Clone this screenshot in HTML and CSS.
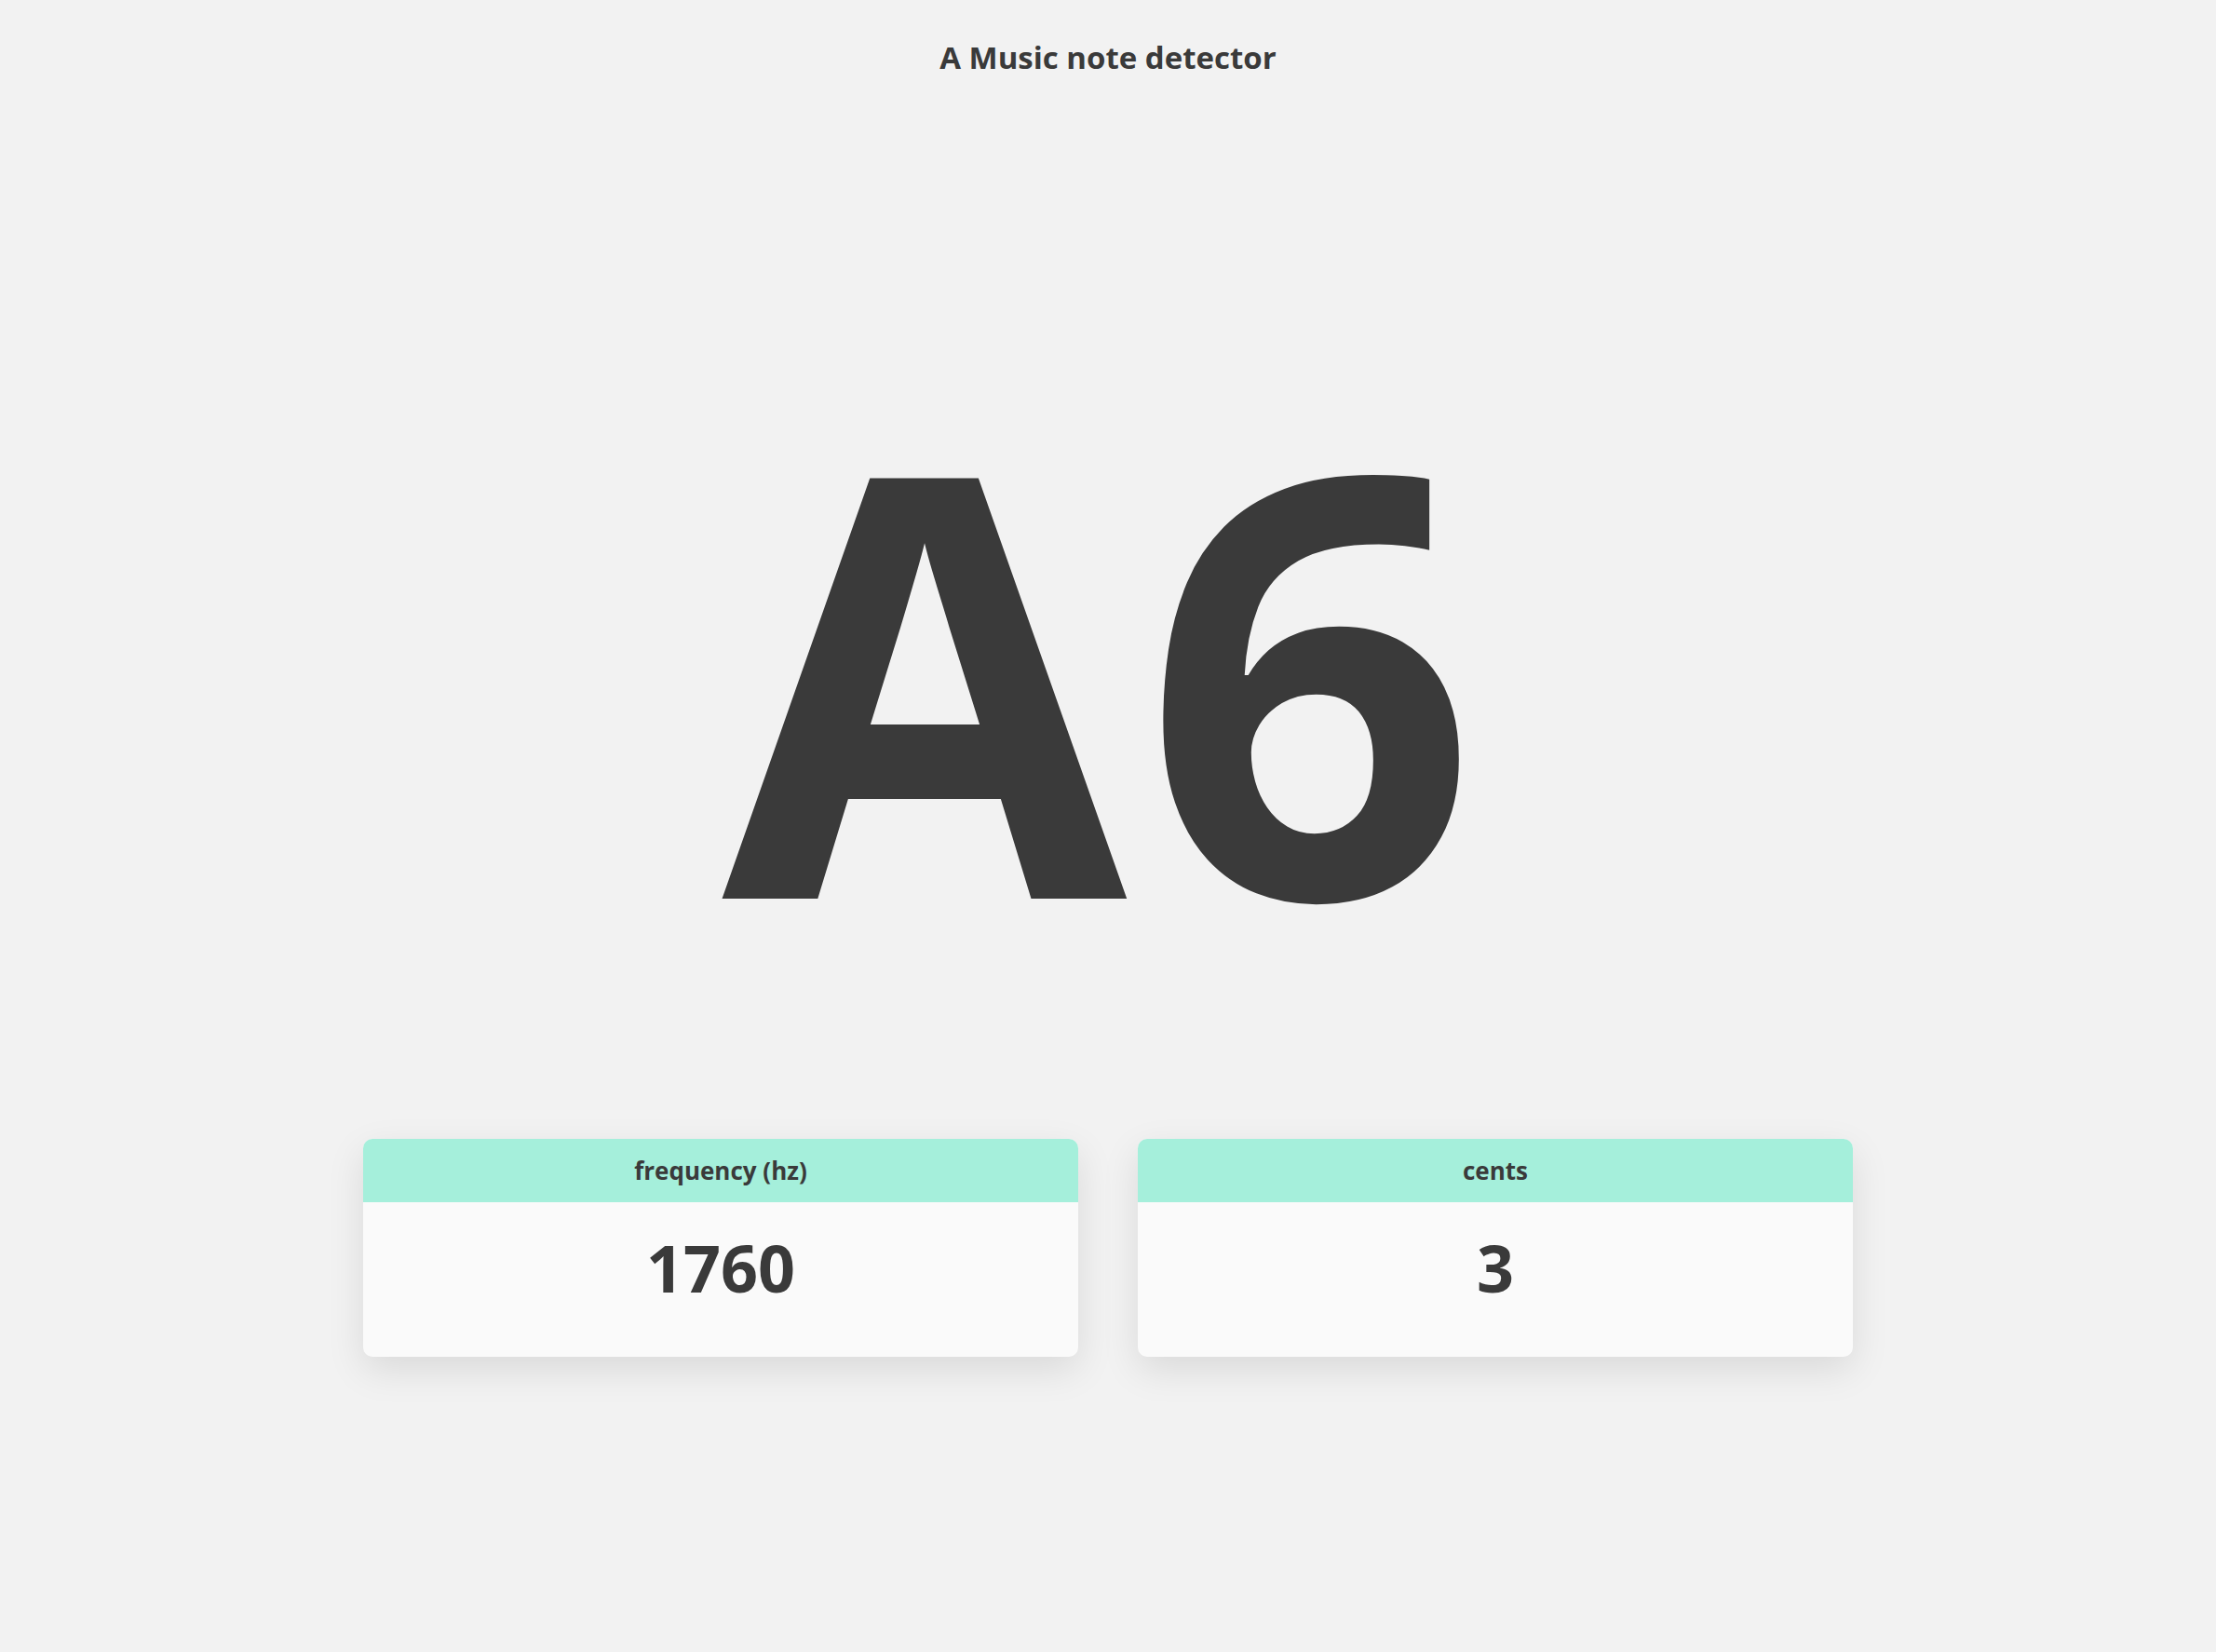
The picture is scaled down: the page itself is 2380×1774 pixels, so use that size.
FILE: index.html
```html
<!DOCTYPE html>
<html lang="en">
<head>
<meta charset="utf-8">
<title>A Music note detector</title>
<link rel="stylesheet" href="styles.css">
</head>
<body>
<main class="app">
  <h1 class="title">A Music note detector</h1>
  <div class="note">A6</div>
  <section class="cards">
    <div class="card">
      <div class="card-header">frequency (hz)</div>
      <div class="card-value">1760</div>
    </div>
    <div class="card">
      <div class="card-header">cents</div>
      <div class="card-value">3</div>
    </div>
  </section>
</main>
</body>
</html>
```

FILE: styles.css
```css
html, body {
  margin: 0;
  padding: 0;
  background: #f2f2f2;
}
body {
  font-family: "Open Sans", "DejaVu Sans", sans-serif;
  color: #3a3a3a;
  min-height: 1774px;
}
.app {
  display: flex;
  flex-direction: column;
  align-items: center;
}
.title {
  margin: 0;
  padding-top: 39px;
  font-size: 33px;
  font-weight: 700;
  line-height: normal;
}
.note {
  margin-top: 322px;
  font-size: 630px;
  font-weight: 700;
  line-height: 630px;
  height: 630px;
  letter-spacing: 17px;
}
.cards {
  margin-top: 187px;
  width: 1600px;
  display: grid;
  grid-template-columns: 1fr 1fr;
  gap: 64px;
}
.card {
  border-radius: 10px;
  overflow: hidden;
  background: #fafafa;
  box-shadow: 0 14px 40px rgba(0, 0, 0, 0.10);
}
.card-header {
  height: 68px;
  line-height: 68px;
  background: #a5efdb;
  text-align: center;
  font-size: 26px;
  font-weight: 700;
}
.card-value {
  height: 166px;
  box-sizing: border-box;
  padding-top: 22px;
  text-align: center;
  font-size: 70px;
  font-weight: 700;
  line-height: normal;
}
```
